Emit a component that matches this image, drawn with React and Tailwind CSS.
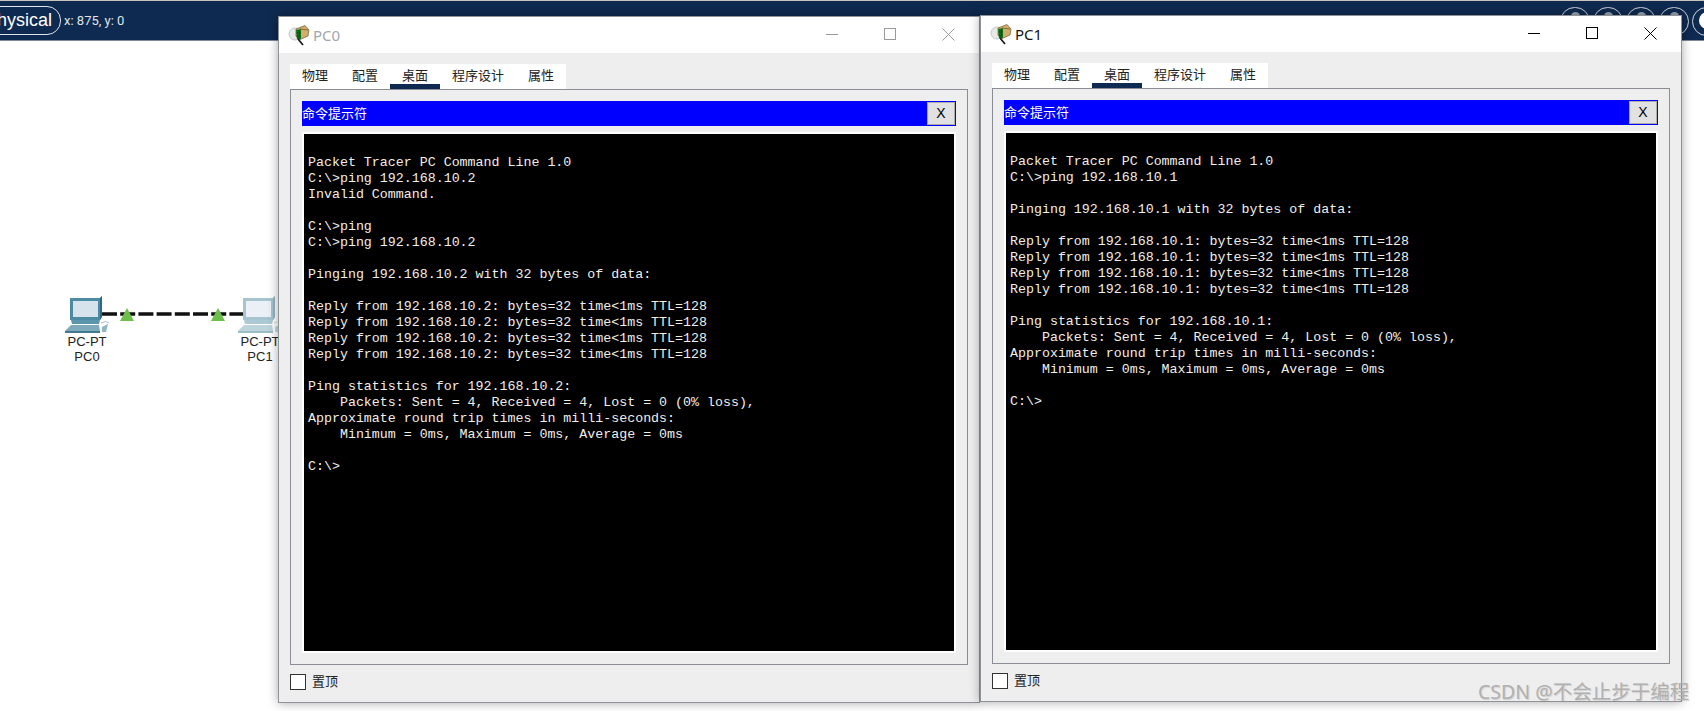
const pc0Lines = [
  '',
  'Packet Tracer PC Command Line 1.0',
  'C:\\>ping 192.168.10.2',
  'Invalid Command.',
  '',
  'C:\\>ping',
  'C:\\>ping 192.168.10.2',
  '',
  'Pinging 192.168.10.2 with 32 bytes of data:',
  '',
  'Reply from 192.168.10.2: bytes=32 time<1ms TTL=128',
  'Reply from 192.168.10.2: bytes=32 time<1ms TTL=128',
  'Reply from 192.168.10.2: bytes=32 time<1ms TTL=128',
  'Reply from 192.168.10.2: bytes=32 time<1ms TTL=128',
  '',
  'Ping statistics for 192.168.10.2:',
  '    Packets: Sent = 4, Received = 4, Lost = 0 (0% loss),',
  'Approximate round trip times in milli-seconds:',
  '    Minimum = 0ms, Maximum = 0ms, Average = 0ms',
  '',
  'C:\\>',
];

const pc1Lines = [
  '',
  'Packet Tracer PC Command Line 1.0',
  'C:\\>ping 192.168.10.1',
  '',
  'Pinging 192.168.10.1 with 32 bytes of data:',
  '',
  'Reply from 192.168.10.1: bytes=32 time<1ms TTL=128',
  'Reply from 192.168.10.1: bytes=32 time<1ms TTL=128',
  'Reply from 192.168.10.1: bytes=32 time<1ms TTL=128',
  'Reply from 192.168.10.1: bytes=32 time<1ms TTL=128',
  '',
  'Ping statistics for 192.168.10.1:',
  '    Packets: Sent = 4, Received = 4, Lost = 0 (0% loss),',
  'Approximate round trip times in milli-seconds:',
  '    Minimum = 0ms, Maximum = 0ms, Average = 0ms',
  '',
  'C:\\>',
];

const cjk = "font-['Liberation_Sans','Noto_Sans_CJK_SC',sans-serif]";

function AppIcon() {
  return (
    <svg width="22" height="22" viewBox="0 0 22 22" className="shrink-0">
      <circle cx="7" cy="10" r="6" fill="#e6e9e7" stroke="#c3c8c5" />
      <path d="M8 5 L17 1.5 L21 6 L20 12 L11 16 L8 12 Z" fill="#d3ad6c" stroke="#6e5a32" strokeWidth="0.7" />
      <path d="M8 6 L13 5 L13 15 L9 15 Z" fill="#0f7a1c" />
      <path d="M10 6 V15 M11.6 6 V15 M8.5 9 H13 M8.5 12 H13" stroke="#063f0c" strokeWidth="0.5" />
      <path d="M12 5 L20 6" stroke="#6e5a32" strokeWidth="0.8" />
      <path d="M10 15 L15 21" stroke="#1c1c1c" strokeWidth="1.8" />
    </svg>
  );
}

function PcIcon({ faded }) {
  return (
    <svg width="46" height="38" viewBox="0 0 46 38" className={faded ? 'opacity-50' : ''}>
      <path d="M6 2 L36 2 L38 0 L38 21 L36 24 L6 24 Z" fill="#4d8ba3" />
      <path d="M36 2 L38 0 L38 21 L36 24 Z" fill="#2f6a82" />
      <rect x="9" y="5" width="25" height="16" fill="#d6e3ec" />
      <path d="M7 24 L36 24 L35 28 L8 28 Z" fill="#5b96ad" />
      <path d="M1 35 L7 29 L35 29 L36 35 Z" fill="#7eaabb" />
      <path d="M1 35 L36 35 L36 37 L1 37 Z" fill="#3f7a92" />
      <path d="M38 31 L44 28 L42 36 L38 36 Z" fill="#8fb6c5" />
      <path d="M37 27 Q42 24 45 27" stroke="#a8c4d0" fill="none" />
    </svg>
  );
}

function PcNode({ left, name, faded }) {
  return (
    <div className={`absolute top-[255px] w-[46px] flex flex-col items-start ${left}`}>
      <PcIcon faded={faded} />
      <div className="w-full flex flex-col items-center text-[13px] leading-[15px] text-[#222] font-['Liberation_Sans',sans-serif]">
        <span className="whitespace-nowrap">PC-PT</span>
        <span>{name}</span>
      </div>
    </div>
  );
}

function PtWindow({ title, lines, active, pos }) {
  return (
    <div
      className={`absolute w-[702px] h-[687px] flex flex-col bg-[#eeeeee] border border-[#8f9296] shadow-[0_0_10px_rgba(0,0,0,0.35)] ${pos}`}
    >
      <div className="h-[36px] shrink-0 bg-white flex items-center pl-[9px]">
        <AppIcon />
        <span className={`ml-[3px] text-[15px] ${active ? 'text-[#111]' : 'text-[#a0a6ae]'} font-['Noto_Sans',sans-serif]`}>
          {title}
        </span>
        <div className={`ml-auto mt-[-2px] pr-[2px] flex items-center ${active ? 'text-black' : 'text-[#9a9a9a]'}`}>
          <div className="w-[58px] flex justify-center">
            <div className="w-[12px] h-px bg-current" />
          </div>
          <div className="w-[58px] flex justify-center">
            <div className="w-[12px] h-[12px] border border-current" />
          </div>
          <div className="w-[58px] flex justify-center">
            <svg width="13" height="13" viewBox="0 0 13 13">
              <path d="M0.5 0.5 L12.5 12.5 M12.5 0.5 L0.5 12.5" stroke="currentColor" fill="none" />
            </svg>
          </div>
        </div>
      </div>

      <div className="flex-1 flex flex-col px-[11px] pt-[11px]">
        <div className={`flex self-start h-[25px] bg-white text-[13px] leading-[18px] text-[#222] ${cjk}`}>
          {['物理', '配置', '桌面', '程序设计', '属性'].map((tab) => (
            <div
              key={tab}
              className={`px-[12px] pt-[3px] ${tab === '桌面' ? 'border-b-[5px] border-[#0f2a50]' : ''}`}
            >
              {tab}
            </div>
          ))}
        </div>

        <div className="h-[576px] border border-[#8a8d96] px-[11px] pt-[11px]">
          <div className="h-[25px] bg-[#0000ff] flex items-center justify-between">
            <span className={`text-[13px] text-white ${cjk}`}>命令提示符</span>
            <div className="w-[28px] h-[23px] mr-px bg-[#e1e1e1] border border-[#adadad] flex items-center justify-center text-[14px] text-black font-['Liberation_Sans',sans-serif]">
              X
            </div>
          </div>
          <div className="mt-[6px] h-[521px] bg-black border-2 border-white overflow-hidden pt-[5px] pl-[4px]">
            <pre className="font-['Liberation_Mono',monospace] text-[13.3px] leading-[16px] text-[#f2efe8]">
              {lines.join('\n')}
            </pre>
          </div>
        </div>

        <div className="flex items-center mt-[7px]">
          <div className="w-[16px] h-[16px] bg-white border border-[#333]" />
          <span className={`ml-[6px] text-[13px] text-[#222] ${cjk}`}>置顶</span>
        </div>
      </div>
    </div>
  );
}

function Workspace() {
  return (
    <div className="flex-1 bg-white relative">
      <PcNode left="left-[64px]" name="PC0" />
      <PcNode left="left-[237px]" name="PC1" faded />
      <svg width="141" height="4" viewBox="0 0 141 4" className="absolute left-[102px] top-[271px]">
        <path d="M0 2 H141" stroke="#111" strokeWidth="3.5" strokeDasharray="15 3.2" fill="none" />
      </svg>
      <svg width="14" height="13" viewBox="0 0 14 13" className="absolute left-[120px] top-[267px]">
        <path d="M7 0 L14 13 L0 13 Z" fill="#6cc04a" />
      </svg>
      <svg width="14" height="13" viewBox="0 0 14 13" className="absolute left-[211px] top-[267px]">
        <path d="M7 0 L14 13 L0 13 Z" fill="#6cc04a" />
      </svg>
    </div>
  );
}

export default function App() {
  return (
    <div className="relative w-[1704px] h-[711px] overflow-hidden bg-white flex flex-col">
      <div className="h-px bg-[#c8c4bc]" />
      <div className="h-[40px] shrink-0 bg-[#0f2a50] border-b border-[#7f8a98] flex items-center text-white font-['Liberation_Sans',sans-serif]">
        <div className="ml-[-22px] h-[29px] pl-[6px] pr-[8px] flex items-center border border-[#dfe4ea] rounded-[14px] text-[18px]">
          Physical
        </div>
        <span className="ml-[3px] text-[13px] text-[#dfe4ea] font-['Roboto',sans-serif]">x: 875, y: 0</span>
      </div>
      <Workspace />

      <div className="absolute right-[-18px] top-[7px] flex gap-[3px]">
        {[0, 1, 2, 3, 4].map((i) => (
          <div key={i} className="w-[30px] h-[29px] rounded-full border border-[#cfd5dc] flex items-start justify-center pt-[4px]">
            {i < 4 && <div className="w-[9px] h-[6px] rounded-t-full bg-[#9aa6b4]" />}
            {i === 4 && <div className="w-[17px] h-[17px] rounded-full bg-white" />}
          </div>
        ))}
      </div>

      <PtWindow title="PC0" lines={pc0Lines} pos="left-[278px] top-[16px]" />
      <PtWindow title="PC1" lines={pc1Lines} active pos="left-[980px] top-[15px]" />

      <div className="absolute left-[1478px] top-[682px] text-[19.5px] leading-[20px] text-[#b0b0b0] [text-shadow:1px_1px_1px_rgba(0,0,0,0.12)] font-['Noto_Sans','Noto_Sans_CJK_SC',sans-serif] whitespace-nowrap">CSDN @不会止步于编程</div>
    </div>
  );
}
